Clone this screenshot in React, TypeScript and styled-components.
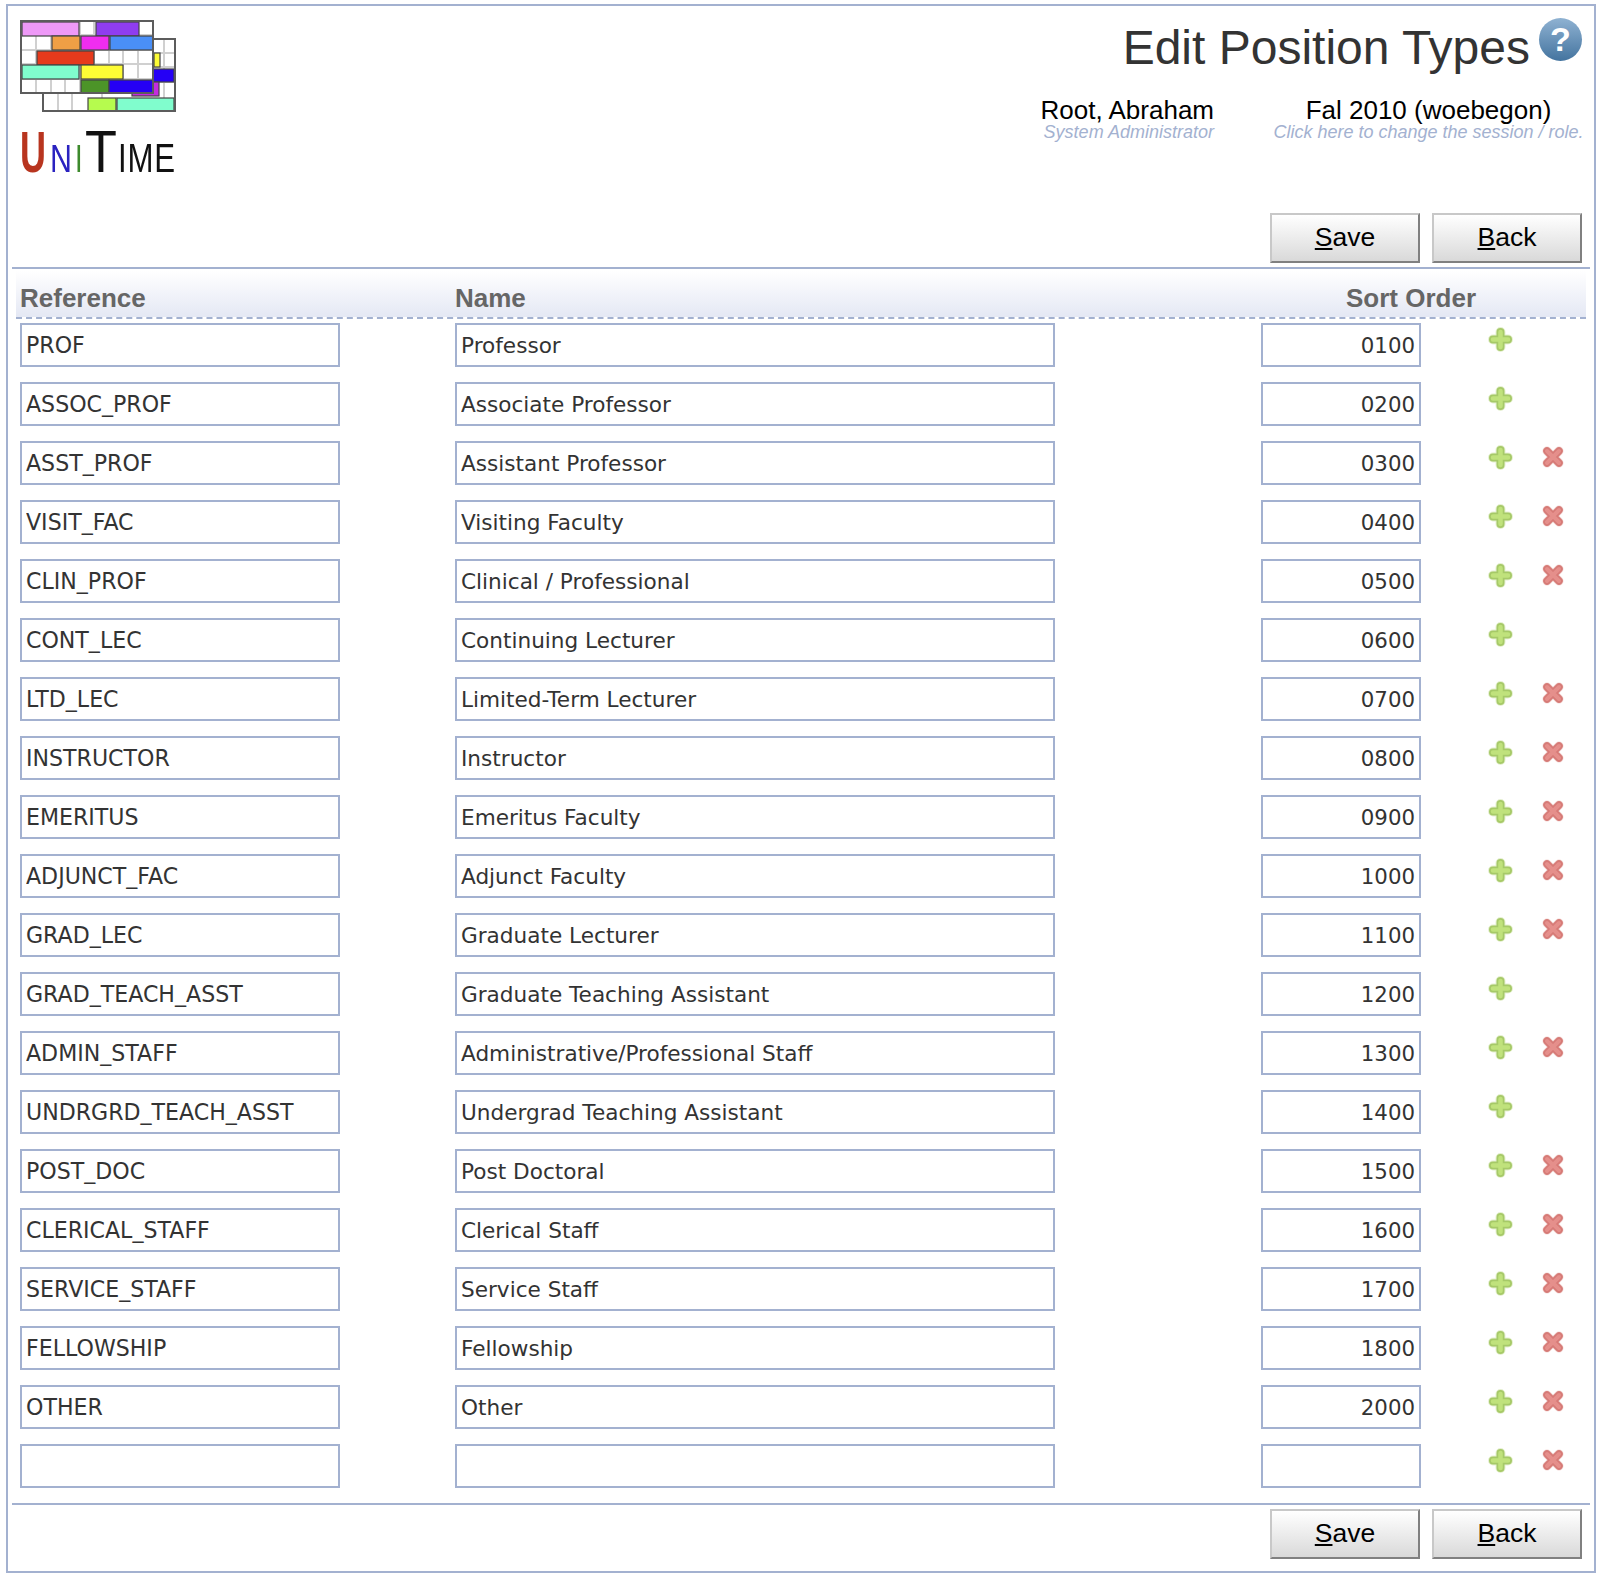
import { FC, ReactElement } from 'react'
import { createGlobalStyle, styled } from 'styled-components'

const GlobalStyle = createGlobalStyle`
  html, body {
    margin: 0;
    background: #ffffff;
    font-family: "Liberation Sans", Arial, sans-serif;
  }
`

const Frame = styled('div')`
  box-sizing: border-box;
  width: 1590px;
  height: 1569px;
  margin: 4px 0 0 6px;
  padding: 0 4px;
  border: 2px solid #a3b1d0;
`

const Header = styled('div')`
  display: flex;
  justify-content: space-between;
  height: 207px;
  padding: 12px 0 0 8px;
  box-sizing: border-box;
`

const LogoBox = styled('div')`
  display: flex;
  flex-direction: column;
  width: 160px;
  margin-top: 2px;
`

const LogoGraphic = styled('svg')`
  filter: blur(0.4px);
`

const LogoWord = styled('div')`
  display: flex;
  align-items: baseline;
  height: 64px;
  margin-top: 4px;
  line-height: 64px;
`

const LogoLetter = styled('span')<{
  $size: number
  $width: number
  $scale: number
  $color?: string
  $light?: boolean
  $spread?: number
}>`
  display: inline-block;
  width: ${(p) => p.$width}px;
  font-size: ${(p) => p.$size}px;
  font-weight: ${(p) => (p.$light ? 400 : 700)};
  letter-spacing: ${(p) => p.$spread ?? 0}px;
  color: ${(p) => p.$color ?? '#111111'};
  white-space: nowrap;
  transform: scaleX(${(p) => p.$scale});
  transform-origin: left bottom;
`

const HeaderRight = styled('div')`
  display: flex;
  flex-direction: column;
  align-items: flex-end;
`

const TitleRow = styled('div')`
  display: flex;
  align-items: flex-start;
  height: 79px;
  margin-right: 8px;
`

const Title = styled('h1')`
  margin: 3px 0 0;
  font-size: 48px;
  line-height: 54px;
  font-weight: 400;
  color: #333333;
`

const HelpIcon = styled('span')`
  display: flex;
  align-items: center;
  justify-content: center;
  width: 43px;
  height: 43px;
  margin-left: 9px;
  border-radius: 50%;
  background: linear-gradient(#8fb2d2, #44749f);
  color: #ffffff;
  font-size: 34px;
  font-weight: 700;
`

const UserRow = styled('div')`
  display: flex;
  margin-right: 6px;
`

const UserBlock = styled('div')`
  width: 174px;
  margin-right: 59px;
  text-align: right;
  white-space: nowrap;
`

const SessionBlock = styled('div')`
  width: 311px;
  text-align: center;
  white-space: nowrap;
`

const BigLine = styled('div')`
  font-size: 26px;
  line-height: 27px;
  color: #000000;
`

const SmallLine = styled('div')`
  font-size: 18px;
  line-height: 17px;
  font-style: italic;
  color: #a3b1d0;
`

const Toolbar = styled('div')`
  display: flex;
  justify-content: flex-end;
  gap: 12px;
  padding-right: 8px;
  box-sizing: border-box;
`

const TopToolbar = styled(Toolbar)`
  height: 56px;
  border-bottom: 2px solid #a3b1d0;
`

const BottomToolbar = styled(Toolbar)`
  height: 59px;
  align-items: flex-start;
  padding-top: 4px;
  border-top: 2px solid #a3b1d0;
`

const Button = styled('button')`
  box-sizing: border-box;
  width: 150px;
  height: 50px;
  padding: 0 0 2px;
  border: 2px solid;
  border-color: #c8c8c8 #808080 #808080 #c8c8c8;
  background: linear-gradient(#ffffff, #d9d9d9);
  color: #000000;
  font-family: "Liberation Sans", sans-serif;
  font-size: 26.5px;
`

const Key = styled('span')`
  text-decoration: underline;
`

const Table = styled('div')`
  height: 1234px;
  padding: 2px 4px 0;
  box-sizing: border-box;
`

const HeaderRow = styled('div')`
  display: grid;
  grid-template-columns: 435px 806px 300px;
  align-items: end;
  box-sizing: border-box;
  height: 48px;
  padding: 0 0 2px 4px;
  border-bottom: 2px dashed #a3b1d0;
  background: linear-gradient(#ffffff, #e4e8f4);
`

const HeaderCell = styled('div')<{ $center?: boolean }>`
  font-size: 26px;
  line-height: 34px;
  font-weight: 700;
  color: #666666;
  text-align: ${(p) => (p.$center ? 'center' : 'left')};
`

const Rows = styled('div')`
  padding-top: 4px;
`

const Row = styled('div')`
  display: grid;
  grid-template-columns: 435px 806px 227px 54px 30px;
  align-items: start;
  height: 59px;
  padding-left: 4px;
`

const TextInput = styled('input')<{ $width: number; $size: number; $right?: boolean }>`
  box-sizing: border-box;
  width: ${(p) => p.$width}px;
  height: 44px;
  padding: 0 4px;
  border: 2px solid #a3b1d0;
  border-radius: 0;
  outline: none;
  background: #ffffff;
  color: #333333;
  font-family: "DejaVu Sans", sans-serif;
  font-size: ${(p) => p.$size}px;
  text-align: ${(p) => (p.$right ? 'right' : 'left')};
`

const IconCell = styled('div')`
  display: flex;
  padding-top: 4px;
`

const RemoveCell = styled(IconCell)`
  padding-top: 5px;
`

const PlusIcon: FC = (): ReactElement => (
  <svg width="25" height="25" viewBox="0 0 25 25">
    <path d="M12.5 5v15M5 12.5h15" stroke="#e6f0d2" strokeWidth="10" strokeLinecap="round" />
    <path d="M12.5 5v15M5 12.5h15" stroke="#a6c968" strokeWidth="8" strokeLinecap="round" />
    <path d="M12.5 5v15M5 12.5h15" stroke="#c0e27c" strokeWidth="4.5" strokeLinecap="round" />
  </svg>
)

const RemoveIcon: FC = (): ReactElement => (
  <svg width="22" height="22" viewBox="0 0 22 22">
    <path d="M5 5l12 12M17 5L5 17" stroke="#f2d6d3" strokeWidth="9" strokeLinecap="round" />
    <path d="M5 5l12 12M17 5L5 17" stroke="#d67a76" strokeWidth="7.5" strokeLinecap="round" />
    <path d="M5 5l12 12M17 5L5 17" stroke="#e58f8b" strokeWidth="4" strokeLinecap="round" />
  </svg>
)

type Cell = [number, number, number, number, string]

const backCells: Cell[] = [
  [134, 33, 6, 14, '#fdfc35'],
  [133, 49, 21, 13, '#2500f5'],
  [112, 62, 27, 14, '#c52be0'],
  [68, 78, 28, 13, '#b6fb4e'],
  [97, 78, 57, 13, '#80fdcd'],
]

const mainCells: Cell[] = [
  [2, 2, 57, 14, '#ee99f7'],
  [76, 2, 43, 14, '#8f3df0'],
  [32, 16, 28, 14, '#ef9f45'],
  [61, 16, 28, 14, '#f02df0'],
  [90, 16, 43, 14, '#4a8ff7'],
  [17, 31, 57, 14, '#e63a1c'],
  [2, 45, 57, 14, '#80fdcd'],
  [61, 45, 42, 14, '#fdfc35'],
  [61, 60, 28, 13, '#4c9428'],
  [89, 60, 44, 13, '#2500f5'],
]

const LogoGrid: FC = (): ReactElement => (
  <LogoGraphic width="160" height="96" viewBox="0 0 160 96">
    <rect x="23" y="19" width="132" height="72" fill="#ffffff" />
    <g stroke="#d0d0d0" strokeWidth="2">
      {[38, 52, 82].map((x) => (
        <path key={x} d={`M${x} 74v16`} />
      ))}
      <path d="M144 20v70M134 33h20M134 47h20M134 62h20" />
    </g>
    {backCells.map(([x, y, w, h, fill]) => (
      <rect key={`${x}-${y}`} x={x} y={y} width={w} height={h} fill={fill} stroke="#444444" strokeWidth="1.2" />
    ))}
    <rect x="23" y="19" width="132" height="72" fill="none" stroke="#5c5c5c" strokeWidth="2" />
    <rect x="1" y="1" width="132" height="72" fill="#ffffff" />
    <g stroke="#d0d0d0" strokeWidth="2">
      {[16, 31, 45, 60, 74, 89, 103, 118].map((x) => (
        <path key={x} d={`M${x} 2v70`} />
      ))}
      {[15, 30, 44, 59].map((y) => (
        <path key={y} d={`M2 ${y}h130`} />
      ))}
    </g>
    {mainCells.map(([x, y, w, h, fill]) => (
      <rect key={`${x}-${y}`} x={x} y={y} width={w} height={h} fill={fill} stroke="#444444" strokeWidth="1.2" />
    ))}
    <rect x="1" y="1" width="132" height="72" fill="none" stroke="#5c5c5c" strokeWidth="2" />
  </LogoGraphic>
)

type Item = { ref: string; name: string; order: string; removable: boolean }

const items: Item[] = [
  { ref: 'PROF', name: 'Professor', order: '0100', removable: false },
  { ref: 'ASSOC_PROF', name: 'Associate Professor', order: '0200', removable: false },
  { ref: 'ASST_PROF', name: 'Assistant Professor', order: '0300', removable: true },
  { ref: 'VISIT_FAC', name: 'Visiting Faculty', order: '0400', removable: true },
  { ref: 'CLIN_PROF', name: 'Clinical / Professional', order: '0500', removable: true },
  { ref: 'CONT_LEC', name: 'Continuing Lecturer', order: '0600', removable: false },
  { ref: 'LTD_LEC', name: 'Limited-Term Lecturer', order: '0700', removable: true },
  { ref: 'INSTRUCTOR', name: 'Instructor', order: '0800', removable: true },
  { ref: 'EMERITUS', name: 'Emeritus Faculty', order: '0900', removable: true },
  { ref: 'ADJUNCT_FAC', name: 'Adjunct Faculty', order: '1000', removable: true },
  { ref: 'GRAD_LEC', name: 'Graduate Lecturer', order: '1100', removable: true },
  { ref: 'GRAD_TEACH_ASST', name: 'Graduate Teaching Assistant', order: '1200', removable: false },
  { ref: 'ADMIN_STAFF', name: 'Administrative/Professional Staff', order: '1300', removable: true },
  { ref: 'UNDRGRD_TEACH_ASST', name: 'Undergrad Teaching Assistant', order: '1400', removable: false },
  { ref: 'POST_DOC', name: 'Post Doctoral', order: '1500', removable: true },
  { ref: 'CLERICAL_STAFF', name: 'Clerical Staff', order: '1600', removable: true },
  { ref: 'SERVICE_STAFF', name: 'Service Staff', order: '1700', removable: true },
  { ref: 'FELLOWSHIP', name: 'Fellowship', order: '1800', removable: true },
  { ref: 'OTHER', name: 'Other', order: '2000', removable: true },
  { ref: '', name: '', order: '', removable: true },
]

const Buttons: FC = (): ReactElement => (
  <>
    <Button type="button">
      <Key>S</Key>ave
    </Button>
    <Button type="button">
      <Key>B</Key>ack
    </Button>
  </>
)

export default function App(): ReactElement {
  return (
    <>
      <GlobalStyle />
      <Frame>
        <Header>
          <LogoBox>
            <LogoGrid />
            <LogoWord>
              <LogoLetter $size={58} $width={30} $scale={0.62} $color="#b8351f">U</LogoLetter>
              <LogoLetter $size={39} $width={25} $scale={0.78} $color="#2a22c0" $light>N</LogoLetter>
              <LogoLetter $size={39} $width={10} $scale={0.7} $color="#3d8a2c" $light>I</LogoLetter>
              <LogoLetter $size={60} $width={33} $scale={0.87} $light>T</LogoLetter>
              <LogoLetter $size={40} $width={57} $scale={0.78} $spread={1} $light>IME</LogoLetter>
            </LogoWord>
          </LogoBox>
          <HeaderRight>
            <TitleRow>
              <Title>Edit Position Types</Title>
              <HelpIcon>?</HelpIcon>
            </TitleRow>
            <UserRow>
              <UserBlock>
                <BigLine>Root, Abraham</BigLine>
                <SmallLine>System Administrator</SmallLine>
              </UserBlock>
              <SessionBlock>
                <BigLine>Fal 2010 (woebegon)</BigLine>
                <SmallLine>Click here to change the session / role.</SmallLine>
              </SessionBlock>
            </UserRow>
          </HeaderRight>
        </Header>
        <TopToolbar>
          <Buttons />
        </TopToolbar>
        <Table>
          <HeaderRow>
            <HeaderCell>Reference</HeaderCell>
            <HeaderCell>Name</HeaderCell>
            <HeaderCell $center>Sort Order</HeaderCell>
          </HeaderRow>
          <Rows>
            {items.map((item, index) => (
              <Row key={index}>
                <TextInput $width={320} $size={22.1} defaultValue={item.ref} />
                <TextInput $width={600} $size={21.6} defaultValue={item.name} />
                <TextInput $width={160} $size={21.3} $right defaultValue={item.order} />
                <IconCell>
                  <PlusIcon />
                </IconCell>
                {item.removable && (
                  <RemoveCell>
                    <RemoveIcon />
                  </RemoveCell>
                )}
              </Row>
            ))}
          </Rows>
        </Table>
        <BottomToolbar>
          <Buttons />
        </BottomToolbar>
      </Frame>
    </>
  )
}
